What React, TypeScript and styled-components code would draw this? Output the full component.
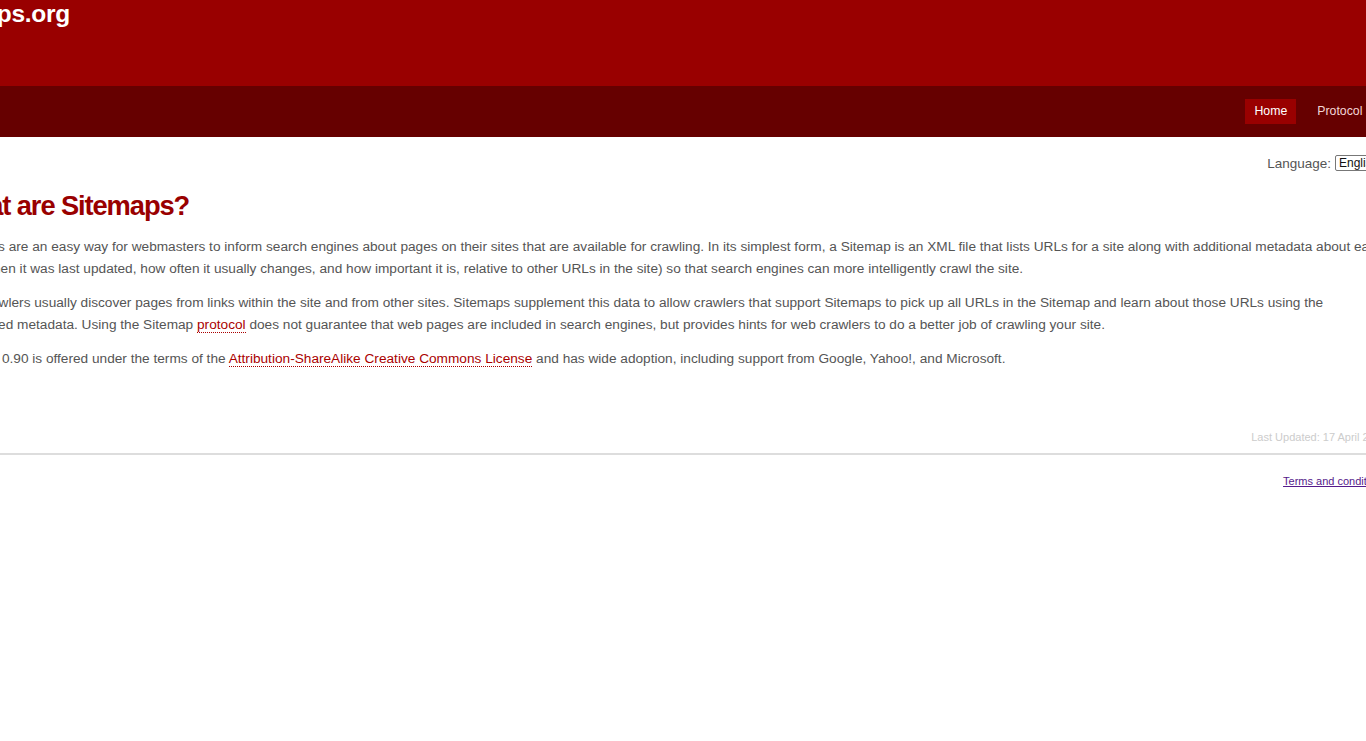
import React from "react";
import styled, { createGlobalStyle } from "styled-components";

const GlobalStyle = createGlobalStyle`
  html, body {
    margin: 0;
    padding: 0;
    background: #fff;
    overflow: hidden;
  }
  body {
    font-family: "Liberation Sans", Arial, Helvetica, sans-serif;
    font-size: 13.67px;
    color: #555;
  }
`;

// the page is wider than the window and scrolled a little to the right
const Frame = styled.div`
  width: 1540px;
  margin-left: -80px;
`;

const Masthead = styled.header`
  background: #990000;
  height: 86px;
  padding-left: 1px;
`;

const Logo = styled.h1`
  margin: 0;
  font-size: 24.5px;
  line-height: 28px;
  font-weight: bold;
  letter-spacing: -0.3px;
  color: #fff;
`;

const NavBar = styled.nav`
  background: #660000;
  height: 51px;
  display: flex;
  justify-content: flex-end;
  align-items: center;
  padding-right: 34px;
`;

const NavList = styled.ul`
  display: flex;
  gap: 12px;
  list-style: none;
  margin: 0;
  padding: 0;
`;

const NavItem = styled.li<{ $active?: boolean }>`
  padding: 5px 9px;
  font-size: 12.3px;
  line-height: 15px;
  color: ${({ $active }) => ($active ? "#fff" : "#f3d6d6")};
  background: ${({ $active }) => ($active ? "#990000" : "transparent")};
`;

const Main = styled.main`
  padding: 0 73px 0 28px;
`;

const LangRow = styled.div`
  display: flex;
  justify-content: flex-end;
  align-items: center;
  gap: 4px;
  margin: 18px -14px 0 0;
  font-size: 13.5px;
  color: #555;
`;

const LangSelect = styled.span`
  display: inline-block;
  width: 58px;
  border: 1px solid #777;
  border-radius: 2px;
  padding: 0 3px;
  font-size: 12px;
  line-height: 14px;
  color: #111;
`;

const Title = styled.h2`
  margin: 19px 0 14px;
  font-size: 27.3px;
  line-height: 32px;
  font-weight: bold;
  letter-spacing: -1.1px;
  color: #990000;
`;

const Para = styled.p`
  margin: 0 0 13px;
  line-height: 21.5px;
`;

const Link = styled.a`
  color: #aa0000;
  text-decoration: none;
  border-bottom: 1px dotted #aa0000;
`;

const Updated = styled.div`
  margin-top: 61px;
  text-align: right;
  font-size: 11px;
  color: #ccc;
  padding-bottom: 10px;
`;

const Footer = styled.footer`
  border-top: 2px solid #ddd;
  margin-right: 73px;
  padding-top: 20px;
  text-align: right;
  font-size: 11px;
`;

const Terms = styled.a`
  color: #551a8b;
  text-decoration: underline;
`;

export default function App() {
  return (
    <Frame>
      <GlobalStyle />
      <Masthead>
        <Logo>sitemaps.org</Logo>
      </Masthead>
      <NavBar>
        <NavList>
          <NavItem $active>Home</NavItem>
          <NavItem>Protocol</NavItem>
          <NavItem>FAQ</NavItem>
        </NavList>
      </NavBar>
      <Main>
        <LangRow>
          Language: <LangSelect>English</LangSelect>
        </LangRow>
        <Title>What are Sitemaps?</Title>
        <Para>
          Sitemaps are an easy way for webmasters to inform search engines about
          pages on their sites that are available for crawling. In its simplest
          form, a Sitemap is an XML file that lists URLs for a site along with
          additional metadata about each URL (when it was last updated, how
          often it usually changes, and how important it is, relative to other
          URLs in the site) so that search engines can more intelligently crawl
          the site.
        </Para>
        <Para>
          Web crawlers usually discover pages from links within the site and
          from other sites. Sitemaps supplement this data to allow crawlers that
          support Sitemaps to pick up all URLs in the Sitemap and learn about
          those URLs using the associated metadata. Using the Sitemap{" "}
          <Link href="#">protocol</Link> does not guarantee that web pages are
          included in search engines, but provides hints for web crawlers to do
          a better job of crawling your site.
        </Para>
        <Para>
          Sitemap 0.90 is offered under the terms of the{" "}
          <Link href="#">Attribution-ShareAlike Creative Commons License</Link>{" "}
          and has wide adoption, including support from Google, Yahoo!, and
          Microsoft.
        </Para>
        <Updated>Last Updated: 17 April 2020</Updated>
      </Main>
      <Footer>
        <Terms href="#">Terms and conditions</Terms>
      </Footer>
    </Frame>
  );
}
